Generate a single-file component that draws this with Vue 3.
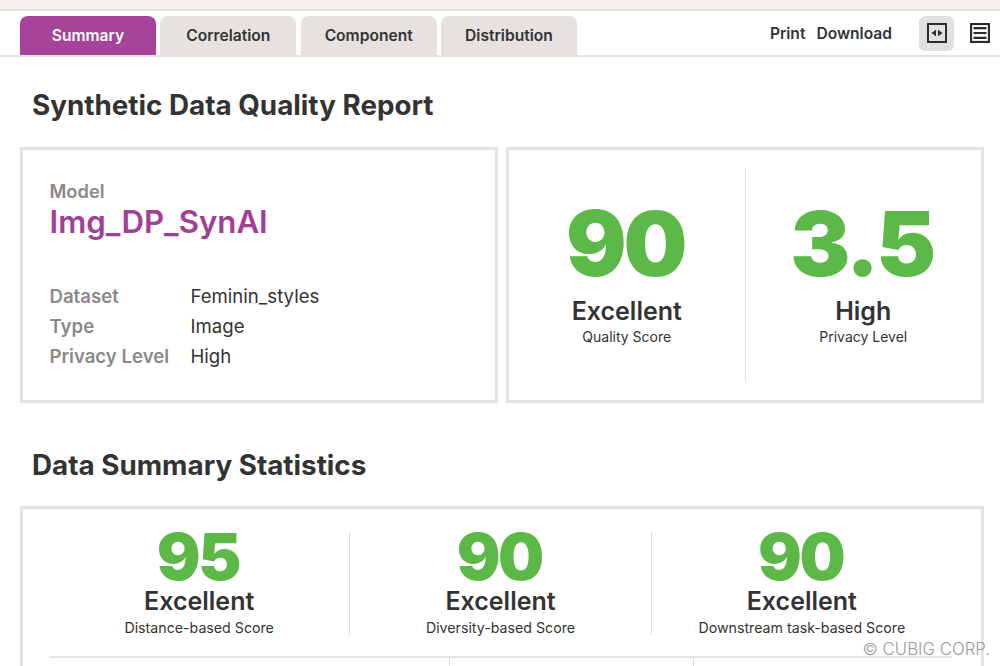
<script setup>
const tabs = ['Summary', 'Correlation', 'Component', 'Distribution']
const meta = [
  ['Dataset', 'Feminin_styles'],
  ['Type', 'Image'],
  ['Privacy Level', 'High']
]
const heroes = [
  { value: '90', grade: 'Excellent', label: 'Quality Score' },
  { value: '3.5', grade: 'High', label: 'Privacy Level' }
]
const stats = [
  { value: '95', grade: 'Excellent', label: 'Distance-based Score' },
  { value: '90', grade: 'Excellent', label: 'Diversity-based Score' },
  { value: '90', grade: 'Excellent', label: 'Downstream task-based Score' }
]
</script>

<template>
  <div class="page">
    <div class="chrome"></div>
    <nav class="nav">
      <div class="tabs">
        <div v-for="(t, i) in tabs" :key="t" class="tab" :class="{ active: i === 0 }">{{ t }}</div>
      </div>
      <div class="actions">
        <span class="act print">Print</span>
        <span class="act download">Download</span>
        <div class="icon-btn">
          <svg width="20" height="20" viewBox="0 0 20 20">
            <rect x="1" y="1" width="18" height="18" fill="none" stroke="#2b2b2b" stroke-width="2" />
            <path d="M9 6.8 V13.2 L4.4 10 Z M11 6.8 V13.2 L15.6 10 Z" fill="#2b2b2b" />
          </svg>
        </div>
        <div class="icon-plain">
          <svg width="20" height="20" viewBox="0 0 20 20">
            <rect x="1" y="1" width="18" height="18" fill="none" stroke="#2b2b2b" stroke-width="2.2" />
            <path d="M3.5 5.2 H16.5 M3.5 10 H16.5 M3.5 14.8 H16.5" stroke="#2b2b2b" stroke-width="2.2" fill="none" />
          </svg>
        </div>
      </div>
    </nav>

    <h1 class="title first">Synthetic Data Quality Report</h1>

    <section class="top-row">
      <div class="card model">
        <div class="model-label">Model</div>
        <div class="model-name">Img_DP_SynAI</div>
        <dl class="meta">
          <div v-for="m in meta" :key="m[0]" class="meta-row">
            <dt>{{ m[0] }}</dt>
            <dd>{{ m[1] }}</dd>
          </div>
        </dl>
      </div>
      <div class="card hero">
        <div v-for="h in heroes" :key="h.label" class="hero-cell">
          <div class="hero-value">{{ h.value }}</div>
          <div class="grade">{{ h.grade }}</div>
          <div class="label">{{ h.label }}</div>
        </div>
      </div>
    </section>

    <h2 class="title second">Data Summary Statistics</h2>

    <section class="card stats">
      <div class="stat-row">
        <div v-for="s in stats" :key="s.label" class="stat-cell">
          <div class="stat-value">{{ s.value }}</div>
          <div class="grade">{{ s.grade }}</div>
          <div class="label stat-label">{{ s.label }}</div>
        </div>
      </div>
      <div class="lower">
        <div class="lower-cell wide"></div>
        <div class="lower-cell mid"></div>
        <div class="lower-cell"></div>
      </div>
    </section>

    <div class="copyright">© CUBIG CORP.</div>
  </div>
</template>

<style>
html, body { margin: 0; background: #fff; overflow: hidden; }
</style>

<style scoped>
.page {
  position: relative;
  width: 1000px;
  height: 666px;
  overflow: hidden;
  background: #fff;
  font-family: Inter, "Liberation Sans", sans-serif;
  color: #333;
}
.chrome {
  height: 9px;
  background: #f4f1ef;
  border-bottom: 2px solid #e6e2e0;
}
.nav {
  height: 44px;
  display: flex;
  justify-content: space-between;
  align-items: flex-end;
  border-bottom: 2px solid #e6e2e0;
  padding: 0 10px 0 20px;
}
.tabs { display: flex; gap: 4.33px; }
.tab {
  width: 136px;
  height: 39px;
  display: flex;
  align-items: center;
  justify-content: center;
  background: #e6e2e0;
  border-radius: 8px 8px 0 0;
  font-size: 15.6px;
  font-weight: 600;
  color: #333;
}
.tab.active { background: #a54499; color: #fff; }
.actions {
  display: flex;
  align-items: center;
  height: 44px;
  font-size: 15.6px;
  font-weight: 600;
}
.act { color: #333; }
.print { margin-right: 11px; }
.download { margin-right: 27px; }
.icon-btn {
  width: 35px;
  height: 35px;
  background: #e3e1df;
  border-radius: 6px;
  display: flex;
  align-items: center;
  justify-content: center;
  margin-right: 16px;
}
.icon-plain { display: flex; }
.title {
  margin: 0;
  font-size: 27.8px;
  line-height: 32px;
  font-weight: 700;
  color: #333;
  padding-left: 32px;
}
.first { padding-top: 32px; padding-bottom: 26px; }
.second { padding-top: 46px; padding-bottom: 25px; }
.top-row {
  display: flex;
  gap: 8px;
  padding: 0 16px 0 20px;
}
.card {
  border: 3px solid #e6e2e0;
  box-sizing: border-box;
  background: #fff;
}
.model {
  width: 478px;
  height: 256px;
  padding: 29px 26.5px;
}
.model-label {
  font-size: 18.3px;
  line-height: 24px;
  font-weight: 600;
  color: #8b8888;
}
.model-name {
  margin-top: 1px;
  font-size: 31.2px;
  line-height: 36px;
  font-weight: 600;
  color: #a23e97;
}
.meta { margin: 41px 0 0; }
.meta-row { display: flex; height: 30px; align-items: center; font-size: 18.6px; }
.meta-row dt { width: 141px; font-weight: 600; color: #8b8888; }
.meta-row dd { margin: 0; color: #333; }
.hero {
  flex: 1;
  height: 256px;
  display: flex;
  padding: 18px 0 19px;
}
.hero-cell {
  flex: 1;
  display: flex;
  flex-direction: column;
  align-items: center;
  padding-top: 28px;
}
.hero-cell + .hero-cell { border-left: 1.5px solid #e0dcda; }
.hero-value {
  font-size: 90px;
  line-height: 96px;
  font-weight: 900;
  letter-spacing: -3px;
  margin-right: 3px;
  color: #5cb947;
}
.grade {
  font-size: 25px;
  line-height: 30px;
  font-weight: 600;
  color: #333;
}
.hero-cell .grade { margin-top: 4px; }
.label {
  font-size: 14px;
  line-height: 20px;
  color: #333;
  margin-top: 1px;
}
.stats {
  height: 200px;
  margin: 0 16px 0 20px;
  padding: 0 29px 0 26px;
}
.stat-row {
  display: flex;
  margin-top: 23px;
  height: 103px;
}
.stat-cell {
  flex: 1;
  display: flex;
  flex-direction: column;
  align-items: center;
}
.stat-cell + .stat-cell { border-left: 1.5px solid #e0dcda; }
.stat-value {
  font-size: 65px;
  line-height: 50px;
  font-weight: 900;
  letter-spacing: -2.5px;
  margin-right: 2.5px;
  color: #5cb947;
}
.stat-cell .grade { margin-top: 4px; }
.stat-label { margin-top: 2px; font-size: 14.2px; }
.lower {
  display: flex;
  border-top: 2px solid #e6e2e0;
  margin-top: 21px;
  height: 60px;
}
.lower-cell { flex: 1; }
.lower-cell.wide { flex: 0 0 400px; }
.lower-cell.mid { flex: 0 0 243px; border-left: 1.5px solid #e0dcda; border-right: 1.5px solid #e0dcda; }
.copyright {
  position: absolute;
  right: 10px;
  top: 640px;
  font-size: 16.8px;
  line-height: 18px;
  font-weight: 300;
  color: #9a9a9a;
}
</style>
